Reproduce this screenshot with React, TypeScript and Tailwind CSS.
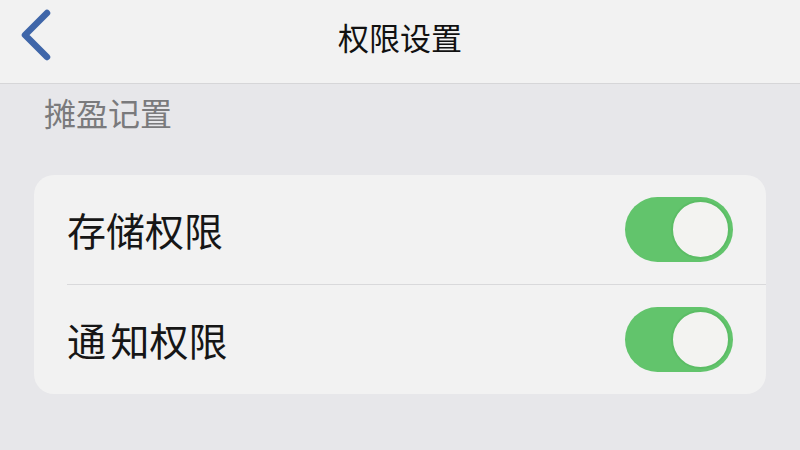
const font = { fontFamily: '"Noto Sans CJK SC", "Noto Sans", sans-serif' };

function Toggle() {
  return (
    <div className="flex h-[65px] w-[108px] items-center justify-end rounded-full bg-[#62c46c] p-[3px]">
      <div className="h-[59px] w-[59px] rounded-full border-[2px] border-[#5bbd65] bg-[#f3f3f1]" />
    </div>
  );
}

function Row({ children }: { children: React.ReactNode }) {
  return (
    <div className="flex h-[109px] items-center justify-between px-[33px]">
      <span className="text-[39px] leading-none text-[#161616]">{children}</span>
      <Toggle />
    </div>
  );
}

export default function App() {
  return (
    <div className="flex h-[450px] w-[800px] flex-col overflow-hidden bg-[#e7e7ea]" style={font}>
      <header className="relative flex h-[84px] shrink-0 items-center justify-center border-b border-[#d6d6d8] bg-[#f2f2f2]">
        <svg className="absolute left-[18px] top-[8px]" width="40" height="54" viewBox="0 0 40 54">
          <path d="M29 5 L7 27 L29 49" fill="none" stroke="#3f66a9" strokeWidth="6.5" strokeLinecap="round" strokeLinejoin="round" />
        </svg>
        <h1 className="mb-[10px] text-[31px] font-normal leading-none text-[#111]">权限设置</h1>
      </header>
      <div className="px-[44px] pt-[12px] text-[32px] leading-none text-[#7a7a7c]">摊盈记置</div>
      <div className="mx-[34px] mt-[47px] overflow-hidden rounded-[20px] bg-[#f2f2f2]">
        <Row>存储权限</Row>
        <div className="ml-[33px] h-px bg-[#d9d9db]" />
        <Row>
          通<span className="text-[20px]"> </span>知权限
        </Row>
      </div>
    </div>
  );
}
